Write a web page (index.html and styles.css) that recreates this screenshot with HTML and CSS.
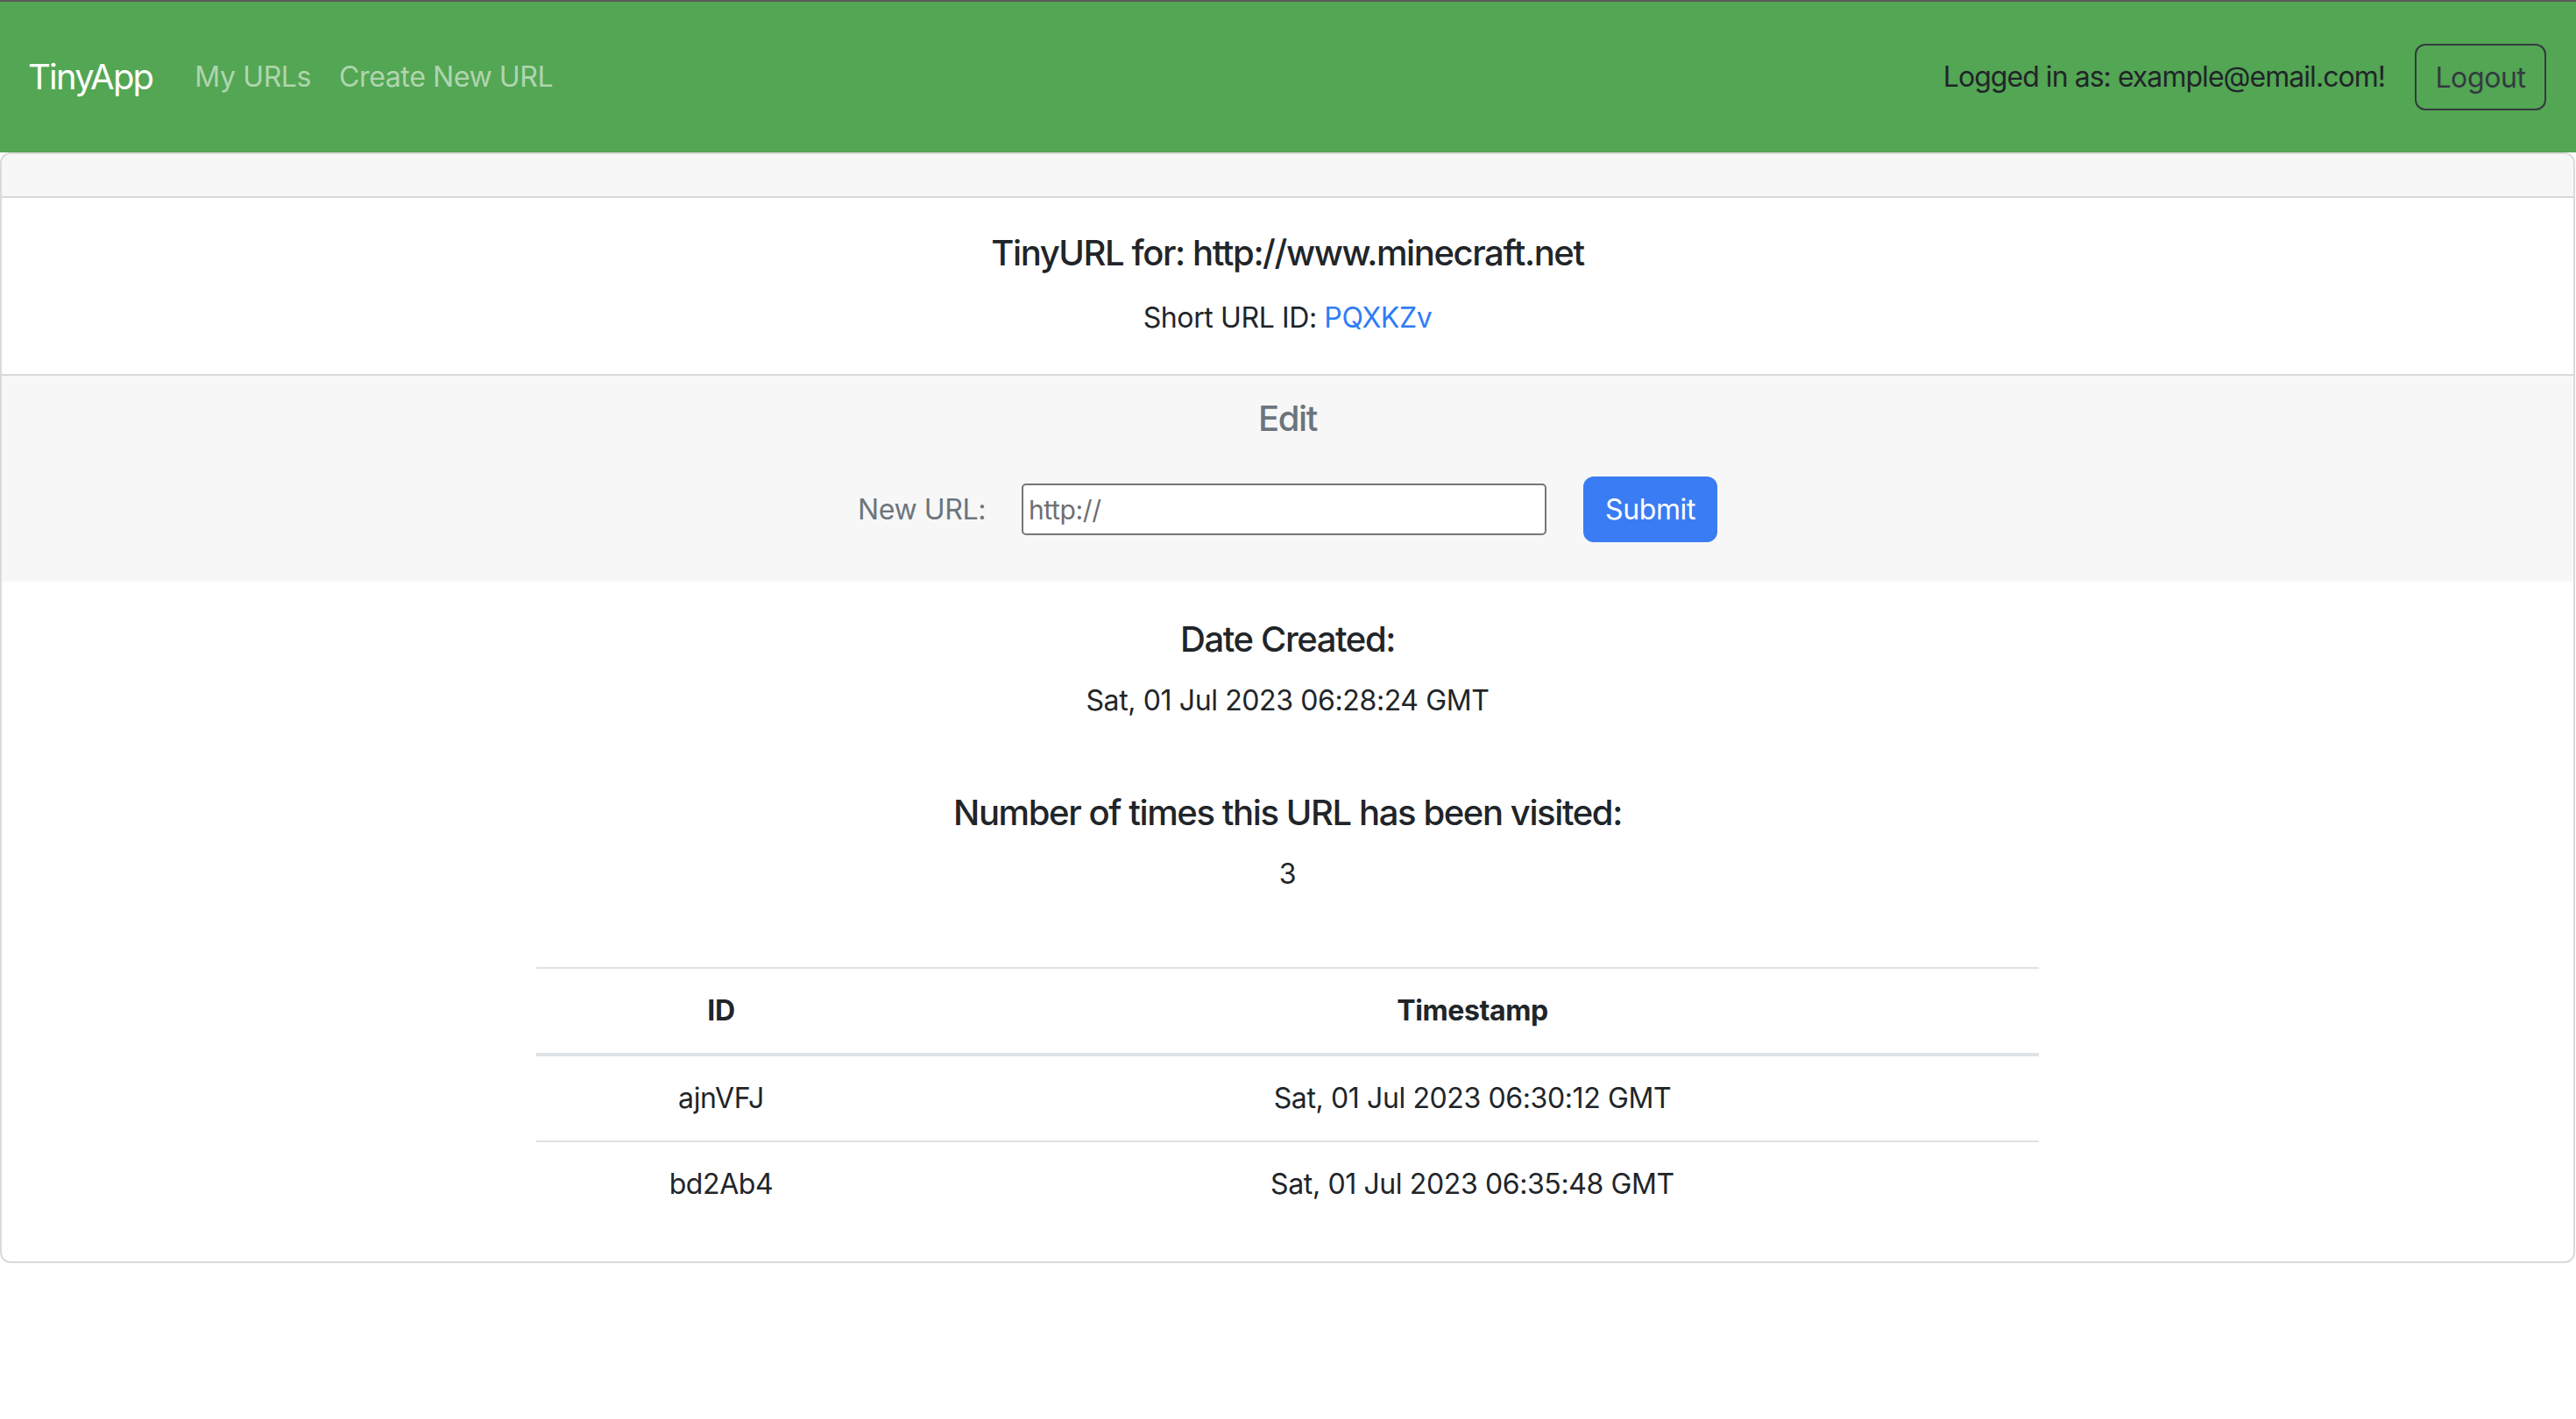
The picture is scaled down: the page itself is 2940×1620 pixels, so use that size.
FILE: index.html
```html
<!DOCTYPE html>
<html lang="en">
<head>
<meta charset="utf-8">
<title>TinyApp</title>
<link rel="stylesheet" href="styles.css">
</head>
<body>
<nav class="navbar">
  <div class="nav-left">
    <a class="brand" href="#">TinyApp</a>
    <a class="nav-link" href="#">My URLs</a>
    <a class="nav-link" href="#">Create New URL</a>
  </div>
  <div class="nav-right">
    <span class="user">Logged in as: example@email.com!</span>
    <button class="btn-logout" type="button">Logout</button>
  </div>
</nav>
<main class="card">
  <div class="card-header"></div>
  <section class="summary">
    <h5 class="heading">TinyURL for: http://www.minecraft.net</h5>
    <p class="text">Short URL ID: <a class="link" href="#">PQXKZv</a></p>
  </section>
  <section class="edit">
    <h5 class="heading edit-title">Edit</h5>
    <form class="edit-form">
      <label class="edit-label" for="newurl">New URL:</label>
      <input class="edit-input" id="newurl" type="text" placeholder="http://">
      <button class="btn-submit" type="button">Submit</button>
    </form>
  </section>
  <section class="stats">
    <h5 class="heading stat-heading">Date Created:</h5>
    <p class="text stat-value first">Sat, 01 Jul 2023 06:28:24 GMT</p>
    <h5 class="heading stat-heading">Number of times this URL has been visited:</h5>
    <p class="text stat-value second">3</p>
    <table class="visits">
      <thead>
        <tr><th class="col-id">ID</th><th>Timestamp</th></tr>
      </thead>
      <tbody>
        <tr><td>ajnVFJ</td><td>Sat, 01 Jul 2023 06:30:12 GMT</td></tr>
        <tr class="last"><td>bd2Ab4</td><td>Sat, 01 Jul 2023 06:35:48 GMT</td></tr>
      </tbody>
    </table>
  </section>
</main>
</body>
</html>
```
FILE: styles.css
```css
* { box-sizing: border-box; }
html, body { margin: 0; padding: 0; }
body {
  font-family: Inter, "Liberation Sans", sans-serif;
  color: #212529;
  background: #fff;
  border-top: 2px solid #5a5a5a;
  letter-spacing: -0.024em;
}
.navbar {
  height: 172px;
  padding: 0 34px 0 32px;
  background: #53a653;
  display: flex;
  align-items: center;
  justify-content: space-between;
}
.nav-left { display: flex; align-items: center; }
.brand {
  font-size: 40px;
  color: #fff;
  text-decoration: none;
  margin-right: 32px;
  line-height: 60px;
  letter-spacing: -0.045em;
}
.nav-link {
  font-size: 32px;
  color: rgba(255,255,255,0.55);
  text-decoration: none;
  padding: 0 16px;
  line-height: 48px;
}
.nav-right { display: flex; align-items: center; gap: 34px; }
.user { font-size: 32px; color: #212529; line-height: 48px; letter-spacing: -0.03em; }
.btn-logout {
  font-family: inherit;
  letter-spacing: inherit;
  font-size: 32px;
  height: 76px;
  width: 150px;
  padding: 0;
  border: 2px solid #343a40;
  border-radius: 12px;
  background: transparent;
  color: #343a40;
}
.card {
  display: block;
  margin-right: 1px;
  border: 2px solid #dadada;
  border-radius: 12px;
  overflow: hidden;
}
.card-header {
  height: 50px;
  background: #f7f7f7;
  border-bottom: 2px solid #d9d9d9;
}
.heading {
  margin: 0;
  font-size: 40px;
  line-height: 48px;
  font-weight: 500;
  letter-spacing: -0.035em;
}
.text {
  margin: 0;
  font-size: 32px;
  line-height: 48px;
}
.summary {
  text-align: center;
  padding: 39px 0 40px;
  border-bottom: 2px solid #d9d9d9;
}
.summary .heading { margin-bottom: 26px; }
.link { color: #2f7cf6; text-decoration: none; }
.edit {
  background: #f7f7f7;
  padding: 25px 0 45px;
  text-align: center;
}
.edit-title { color: #6c757d; margin-bottom: 42px; }
.edit-form {
  display: flex;
  justify-content: center;
  align-items: center;
  height: 75px;
}
.edit-label {
  font-size: 32px;
  color: #6c757d;
  margin-right: 41px;
}
.edit-input {
  width: 599px;
  height: 59px;
  border: 2px solid #767676;
  border-radius: 5px;
  padding: 0 6px;
  font-family: inherit;
  letter-spacing: inherit;
  font-size: 30px;
  background: #fff;
  margin-right: 42px;
}
.edit-input::placeholder { color: #6f6f6f; }
.btn-submit {
  width: 153px;
  height: 75px;
  border: none;
  border-radius: 12px;
  background: #3a7cf3;
  color: #fff;
  font-family: inherit;
  letter-spacing: inherit;
  font-size: 32px;
}
.stats {
  text-align: center;
  padding: 42px 0 40px;
}
.stat-heading { margin-bottom: 22px; }
.stat-value.first { margin-bottom: 80px; }
.stat-value.second { margin-bottom: 82px; }
.visits {
  width: 1715px;
  margin: 0 auto;
  border-collapse: separate;
  border-spacing: 0;
  font-size: 32px;
  line-height: 48px;
}
.visits th {
  font-weight: 700;
  padding: 24px;
  border-top: 2px solid #dee2e6;
  border-bottom: 4px solid #dee2e6;
}
.visits td {
  padding: 24px;
  border-bottom: 2px solid #dee2e6;
}
.visits tr.last td { border-bottom: none; }
.col-id { width: 422px; }
```
